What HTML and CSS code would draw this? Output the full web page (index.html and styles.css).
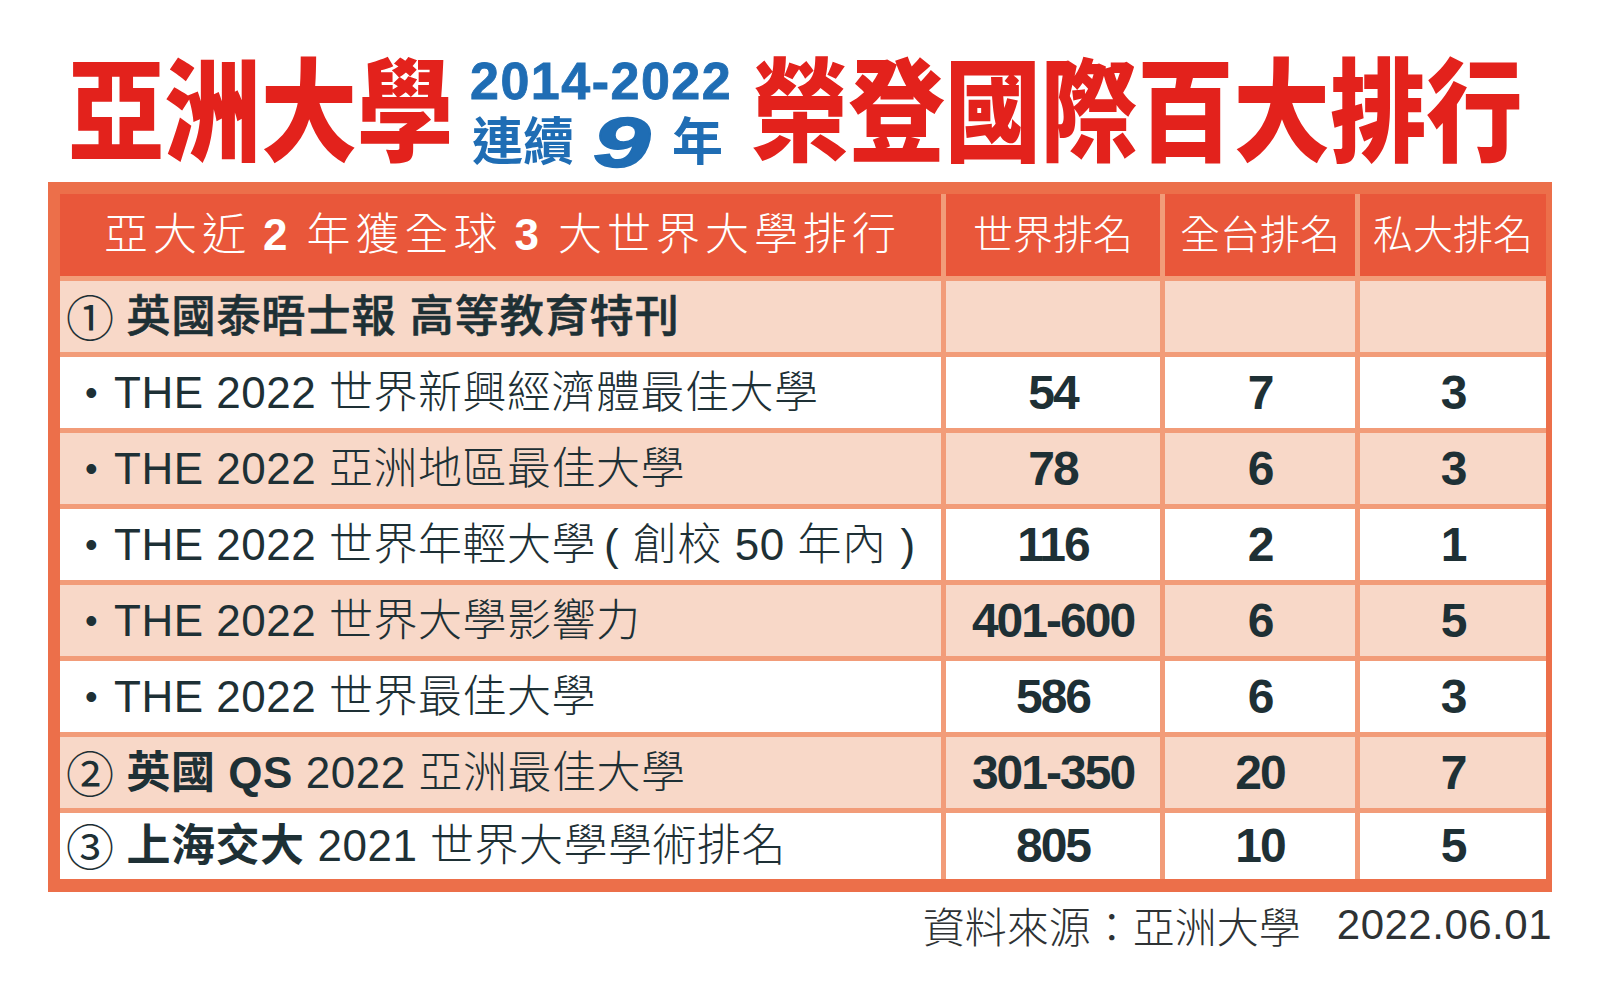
FILE: index.html
```html
<!DOCTYPE html>
<html lang="zh-Hant">
<head>
<meta charset="utf-8">
<title>亞洲大學 榮登國際百大排行</title>
<link rel="stylesheet" href="styles.css">
</head>
<body>
<div class="page">
  <header class="title">
    <span class="red r1">亞洲大學</span>
    <div class="blue">
      <div class="years">2014-2022</div>
      <div class="cont"><span>連續</span><span class="nine">9</span><span>年</span></div>
    </div>
    <span class="red r2">榮登國際百大排行</span>
  </header>

  <div class="board">
    <div class="grid">
      <div class="cell hd hd-main"><span>亞大近</span><b class="d">2</b><span>年獲全球</span><b class="d">3</b><span>大世界大學排行</span></div>
      <div class="cell hd">世界排名</div>
      <div class="cell hd">全台排名</div>
      <div class="cell hd">私大排名</div>

      <div class="cell pe lbl circ"><span class="cn">①</span><b class="mid">英國泰晤士報 高等教育特刊</b></div>
      <div class="cell pe"></div>
      <div class="cell pe"></div>
      <div class="cell pe"></div>

      <div class="cell wh lbl bul"><span class="dot">•</span><span>THE 2022 世界新興經濟體最佳大學</span></div>
      <div class="cell wh num">54</div>
      <div class="cell wh num">7</div>
      <div class="cell wh num">3</div>

      <div class="cell pe lbl bul"><span class="dot">•</span><span>THE 2022 亞洲地區最佳大學</span></div>
      <div class="cell pe num">78</div>
      <div class="cell pe num">6</div>
      <div class="cell pe num">3</div>

      <div class="cell wh lbl bul"><span class="dot">•</span><span>THE 2022 世界年輕大學</span><span class="par">(</span><span>創校 50 年內</span><span class="par">)</span></div>
      <div class="cell wh num">116</div>
      <div class="cell wh num">2</div>
      <div class="cell wh num">1</div>

      <div class="cell pe lbl bul"><span class="dot">•</span><span>THE 2022 世界大學影響力</span></div>
      <div class="cell pe num">401-600</div>
      <div class="cell pe num">6</div>
      <div class="cell pe num">5</div>

      <div class="cell wh lbl bul"><span class="dot">•</span><span>THE 2022 世界最佳大學</span></div>
      <div class="cell wh num">586</div>
      <div class="cell wh num">6</div>
      <div class="cell wh num">3</div>

      <div class="cell pe lbl circ"><span class="cn">②</span><b>英國 QS</b><span class="rest">2022 亞洲最佳大學</span></div>
      <div class="cell pe num">301-350</div>
      <div class="cell pe num">20</div>
      <div class="cell pe num">7</div>

      <div class="cell wh lbl circ"><span class="cn">③</span><b>上海交大</b><span class="rest">2021 世界大學學術排名</span></div>
      <div class="cell wh num">805</div>
      <div class="cell wh num">10</div>
      <div class="cell wh num">5</div>
    </div>
  </div>

  <div class="source"><span>資料來源：亞洲大學</span><span class="date">2022.06.01</span></div>
</div>
</body>
</html>
```

FILE: styles.css
```css
* { box-sizing: border-box; }
html, body { margin: 0; padding: 0; background: #ffffff; }
body {
  font-family: "Liberation Sans", "Noto Sans CJK TC", sans-serif;
  color: #1e3035;
}
.page { width: 1600px; height: 997px; overflow: hidden; }

/* ---------- title ---------- */
.title {
  display: flex;
  align-items: flex-start;
  height: 182px;
  padding-left: 68px;
}
.red {
  display: inline-block;
  margin-top: 48px;
  font-family: "Noto Sans CJK TC", sans-serif;
  font-weight: 900;
  font-size: 112px;
  line-height: 112px;
  color: #e3221c;
  white-space: nowrap;
  transform: scaleX(0.86);
  transform-origin: left center;
}
.r1 { margin-right: -63px; }
.r2 { margin-left: 20px; margin-right: -125px; }

.blue {
  margin-top: 55px;
  margin-left: 17px;
  color: #1f6db4;
  font-family: "Liberation Sans", "Noto Sans CJK TC", sans-serif;
  font-weight: bold;
}
.years {
  font-size: 52px;
  line-height: 52px;
  letter-spacing: 1.5px;
  -webkit-text-stroke: 0.8px #1f6db4;
}
.cont {
  display: flex;
  align-items: flex-end;
  margin-top: 8px;
  padding-left: 2px;
  font-size: 51px;
  line-height: 56px;
  height: 56px;
}
.nine {
  display: inline-block;
  font-size: 70px;
  line-height: 50px;
  font-style: italic;
  font-weight: bold;
  margin: 0 31px 3px 28px;
  transform: scaleX(1.48);
  -webkit-text-stroke: 1.5px #1f6db4;
}

/* ---------- table ---------- */
.board {
  margin-left: 48px;
  width: 1504px;
  padding: 12px 6px 13px 12px;
  background: #ec6f4a;
}
.grid {
  display: grid;
  grid-template-columns: 881px 214px 190px 186px;
  grid-template-rows: 82px repeat(7, 71px) 66px;
  gap: 5px;
  background: #f29c79;
}
.cell {
  display: flex;
  align-items: center;
  white-space: nowrap;
}
.hd {
  background: #e9573a;
  color: #ffffff;
  justify-content: center;
  font-size: 40px;
  font-weight: 300;
  line-height: 1;
}
.hd-main {
  font-size: 44px;
  letter-spacing: 5px;
  padding-left: 4px;
}
.hd-main .d { font-weight: bold; margin: 0 14px 0 12px; }
.pe { background: #f8d8c8; }
.wh { background: #ffffff; }

.lbl {
  font-size: 44px;
  line-height: 1;
  font-weight: 300;
  letter-spacing: 0.5px;
}
.lbl b { font-weight: bold; }
.lbl b.mid { font-weight: 500; letter-spacing: 1px; -webkit-text-stroke: 0.6px #1e3035; }
.bul { padding-left: 25px; }
.dot { font-size: 36px; margin-right: 16px; }
.par { font-weight: 300; margin: 0 14px 0 8px; }
.par + span + .par { margin: 0 0 0 14px; }
.circ { padding-left: 6px; }
.cn {
  font-family: "Noto Sans CJK TC", sans-serif;
  font-weight: 400;
  font-size: 48px;
  margin-right: 12px;
  margin-bottom: 4px;
}
.rest { margin-left: 13px; }

.num {
  justify-content: center;
  font-family: "Liberation Sans", sans-serif;
  font-weight: bold;
  font-size: 48px;
  line-height: 1;
  letter-spacing: -2px;
}

/* ---------- source ---------- */
.source {
  display: flex;
  justify-content: flex-end;
  width: 1552px;
  margin-top: 8px;
  font-family: "Noto Sans CJK TC", sans-serif;
  font-weight: 300;
  font-size: 42px;
  line-height: 50px;
  color: #2e3234;
}
.date {
  margin-left: 36px;
  font-family: "Liberation Sans", sans-serif;
  font-weight: normal;
  letter-spacing: 0.5px;
}
```
